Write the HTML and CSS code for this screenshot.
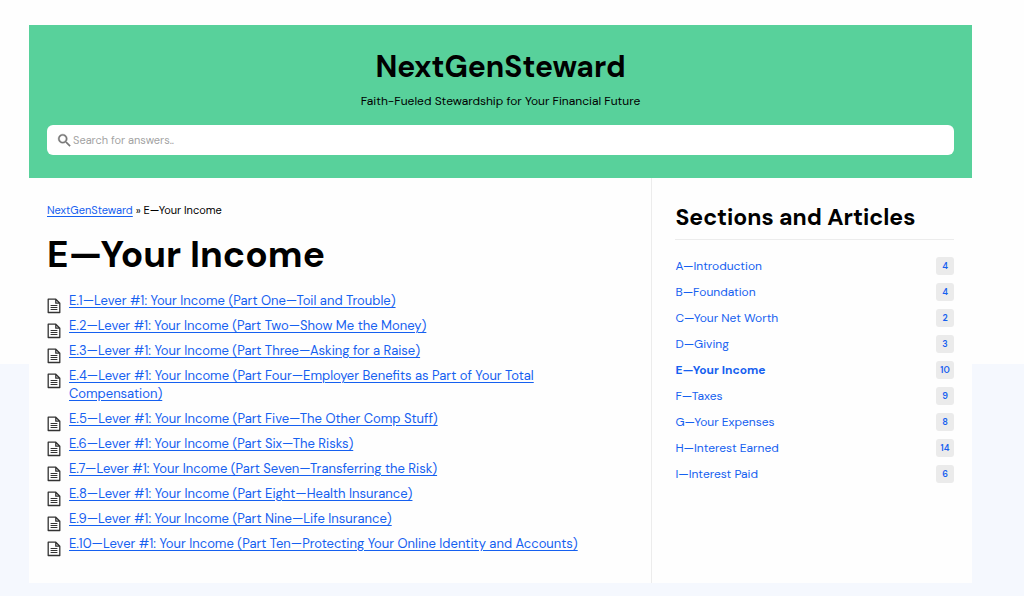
FILE: index.html
```html
<!DOCTYPE html>
<html lang="en">
<head>
  <meta charset="UTF-8">
  <meta name="viewport" content="width=device-width, initial-scale=1.0">
  <title>E—Your Income - NextGenSteward</title>
  <link rel="stylesheet" href="styles.css">
</head>
<body>
  <!-- Shared icons -->
  <svg class="sprite" aria-hidden="true">
    <symbol id="icon-article" viewBox="0 0 14 16">
      <path d="M1.2 1.2h7.6L12.8 5.2v9.3H1.2z M8.8 1.2V5.2h4" fill="none" stroke="#333" stroke-width="1.3" stroke-linejoin="round"/>
      <path d="M3.6 7.5h6.8M3.6 9.5h6.8M3.6 11.5h6.8" stroke="#333" stroke-width="1"/>
    </symbol>
  </svg>

  <div class="container">
    <header class="kb-header">
      <h1 class="site-title">NextGenSteward</h1>
      <p class="tagline">Faith-Fueled Stewardship for Your Financial Future</p>
      <form class="search">
        <label for="search-input" aria-label="Search">
          <svg class="search-icon" viewBox="0 0 24 24"><path d="M15.5 14h-.79l-.28-.27A6.47 6.47 0 0 0 16 9.5 6.5 6.5 0 1 0 9.5 16c1.61 0 3.09-.59 4.23-1.57l.27.28v.79l5 4.99L20.49 19l-4.99-5zm-6 0C7.01 14 5 11.99 5 9.5S7.01 5 9.5 5 14 7.01 14 9.5 11.99 14 9.5 14z" fill="#777" stroke="#777" stroke-width=".5"/></svg>
        </label>
        <input type="text" id="search-input" placeholder="Search for answers..">
      </form>
    </header>

    <div class="columns">
      <main class="content">
        <nav class="breadcrumbs"><a href="#">NextGenSteward</a> » E—Your Income</nav>
        <h2 class="category-title">E—Your Income</h2>
        <ul class="articles">
          <li><svg class="article-icon"><use href="#icon-article"/></svg><a href="#">E.1—Lever #1: Your Income (Part One—Toil and Trouble)</a></li>
          <li><svg class="article-icon"><use href="#icon-article"/></svg><a href="#">E.2—Lever #1: Your Income (Part Two—Show Me the Money)</a></li>
          <li><svg class="article-icon"><use href="#icon-article"/></svg><a href="#">E.3—Lever #1: Your Income (Part Three—Asking for a Raise)</a></li>
          <li><svg class="article-icon"><use href="#icon-article"/></svg><a href="#">E.4—Lever #1: Your Income (Part Four—Employer Benefits as Part of Your Total Compensation)</a></li>
          <li><svg class="article-icon"><use href="#icon-article"/></svg><a href="#">E.5—Lever #1: Your Income (Part Five—The Other Comp Stuff)</a></li>
          <li><svg class="article-icon"><use href="#icon-article"/></svg><a href="#">E.6—Lever #1: Your Income (Part Six—The Risks)</a></li>
          <li><svg class="article-icon"><use href="#icon-article"/></svg><a href="#">E.7—Lever #1: Your Income (Part Seven—Transferring the Risk)</a></li>
          <li><svg class="article-icon"><use href="#icon-article"/></svg><a href="#">E.8—Lever #1: Your Income (Part Eight—Health Insurance)</a></li>
          <li><svg class="article-icon"><use href="#icon-article"/></svg><a href="#">E.9—Lever #1: Your Income (Part Nine—Life Insurance)</a></li>
          <li><svg class="article-icon"><use href="#icon-article"/></svg><a href="#">E.10—Lever #1: Your Income (Part Ten—Protecting Your Online Identity and Accounts)</a></li>
        </ul>
      </main>

      <aside class="sidebar">
        <h3 class="sidebar-title">Sections and Articles</h3>
        <ul class="sections">
          <li><a href="#">A—Introduction <span class="count">4</span></a></li>
          <li><a href="#">B—Foundation <span class="count">4</span></a></li>
          <li><a href="#">C—Your Net Worth <span class="count">2</span></a></li>
          <li><a href="#">D—Giving <span class="count">3</span></a></li>
          <li><a href="#" class="active">E—Your Income <span class="count">10</span></a></li>
          <li><a href="#">F—Taxes <span class="count">9</span></a></li>
          <li><a href="#">G—Your Expenses <span class="count">8</span></a></li>
          <li><a href="#">H—Interest Earned <span class="count">14</span></a></li>
          <li><a href="#">I—Interest Paid <span class="count">6</span></a></li>
        </ul>
      </aside>
    </div>
  </div>
</body>
</html>
```

FILE: styles.css
```css
* {
  box-sizing: border-box;
}

html {
  min-height: 100%;
  /* White top part, pale blue below */
  background: linear-gradient(#fefefe 61%, #f5f8fe 61%);
}

body {
  margin: 0;
  padding: 25px 52px 13px 29px;
  font-family: "DM Sans", Inter, sans-serif;
  font-size: 12px;
  color: #000;
}

h1, h2, h3, p, ul {
  margin: 0;
  padding: 0;
}

ul {
  list-style: none;
}

a {
  color: #1560f0;
}

.sprite {
  display: none;
}

.container {
  background: #fefefe;
}

/* Header */
.kb-header {
  padding: 22px 18px 23px;
  background: #58d19b;
  text-align: center;
}

.site-title {
  font-size: 30px;
  line-height: 40px;
}

.tagline {
  margin: 6px 0 16px;
  font-size: 12px;
  line-height: 16px;
}

.search {
  display: flex;
  align-items: center;
  height: 30px;
  padding: 0 9px;
  background: #fff;
  border-radius: 6px;
}

.search label,
.search-icon {
  display: block;
  width: 17px;
  height: 17px;
}

.search input {
  flex: 1;
  padding: 0;
  border: none;
  outline: none;
  background: none;
  font-family: inherit;
  font-size: 11px;
}

.search input::placeholder {
  color: #a3a3a3;
}

/* Content */
.columns {
  display: flex;
}

.content {
  flex: 1;
  padding: 24px 40px 23px 18px;
}

.breadcrumbs {
  font-size: 11px;
  line-height: 16px;
}

.category-title {
  margin: 12px 0 14px;
  font-size: 37px;
  line-height: 48px;
}

.articles li {
  display: flex;
  gap: 8px;
  margin-bottom: 7px;
  font-size: 13px;
  line-height: 18px;
}

.article-icon {
  flex: none;
  width: 14px;
  height: 16px;
  margin: 6px 0 -4px;
}

.articles a,
.breadcrumbs a {
  text-underline-offset: 2px;
}

/* Sidebar */
.sidebar {
  width: 34%;
  padding: 23px 18px 0 23px;
  border-left: 1px solid #ececec;
}

.sidebar-title {
  padding-bottom: 6px;
  border-bottom: 1px solid #ececec;
  font-size: 23px;
  line-height: 32px;
}

.sections {
  margin-top: 17px;
}

.sections li {
  margin-bottom: 8px;
}

.sections a {
  display: flex;
  justify-content: space-between;
  align-items: center;
  font-size: 12px;
  line-height: 18px;
  text-decoration: none;
}

.sections .active {
  font-weight: 700;
}

.count {
  width: 18px;
  background: #ebebeb;
  border-radius: 3px;
  font-size: 9px;
  font-weight: 600;
  text-align: center;
}
```
